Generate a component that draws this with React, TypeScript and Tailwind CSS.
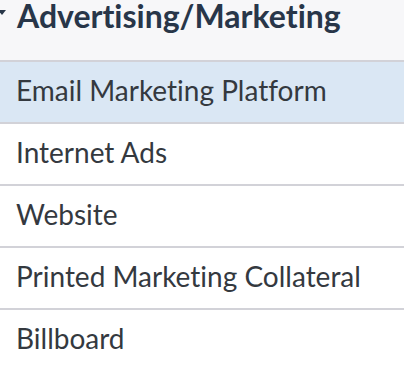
const items = [
  'Email Marketing Platform',
  'Internet Ads',
  'Website',
  'Printed Marketing Collateral',
  'Billboard'
];

export default function App() {
  return (
    <div
      className="h-[370px] w-[404px] overflow-hidden bg-white [font-variant-ligatures:none]"
      style={{ fontFamily: 'Lato, "Noto Sans", sans-serif' }}
    >
      {/* Section header */}
      <div className="flex h-[60px] items-start bg-[#f7f7f9]">
        <svg
          width="8"
          height="6"
          viewBox="0 0 8 6"
          className="ml-[-2px] mt-[10px] shrink-0"
        >
          <path d="M0 0 L8 0 L4 5 Z" fill="#283649" />
        </svg>
        <span className="ml-[11px] text-[32px] font-bold leading-[32px] text-[#283649]">
          Advertising/Marketing
        </span>
      </div>

      {/* Items */}
      <div className="flex flex-col">
        {items.map((item, idx) => (
          <div
            key={item}
            className={
              'flex h-[62px] items-center border-t-2 border-[#d2d2d8] pb-[4px] pl-[16px] text-[28px] text-[#34393f] ' +
              (idx === 0 ? 'bg-[#dae7f4]' : 'bg-white')
            }
          >
            {item}
          </div>
        ))}
      </div>
    </div>
  );
}
